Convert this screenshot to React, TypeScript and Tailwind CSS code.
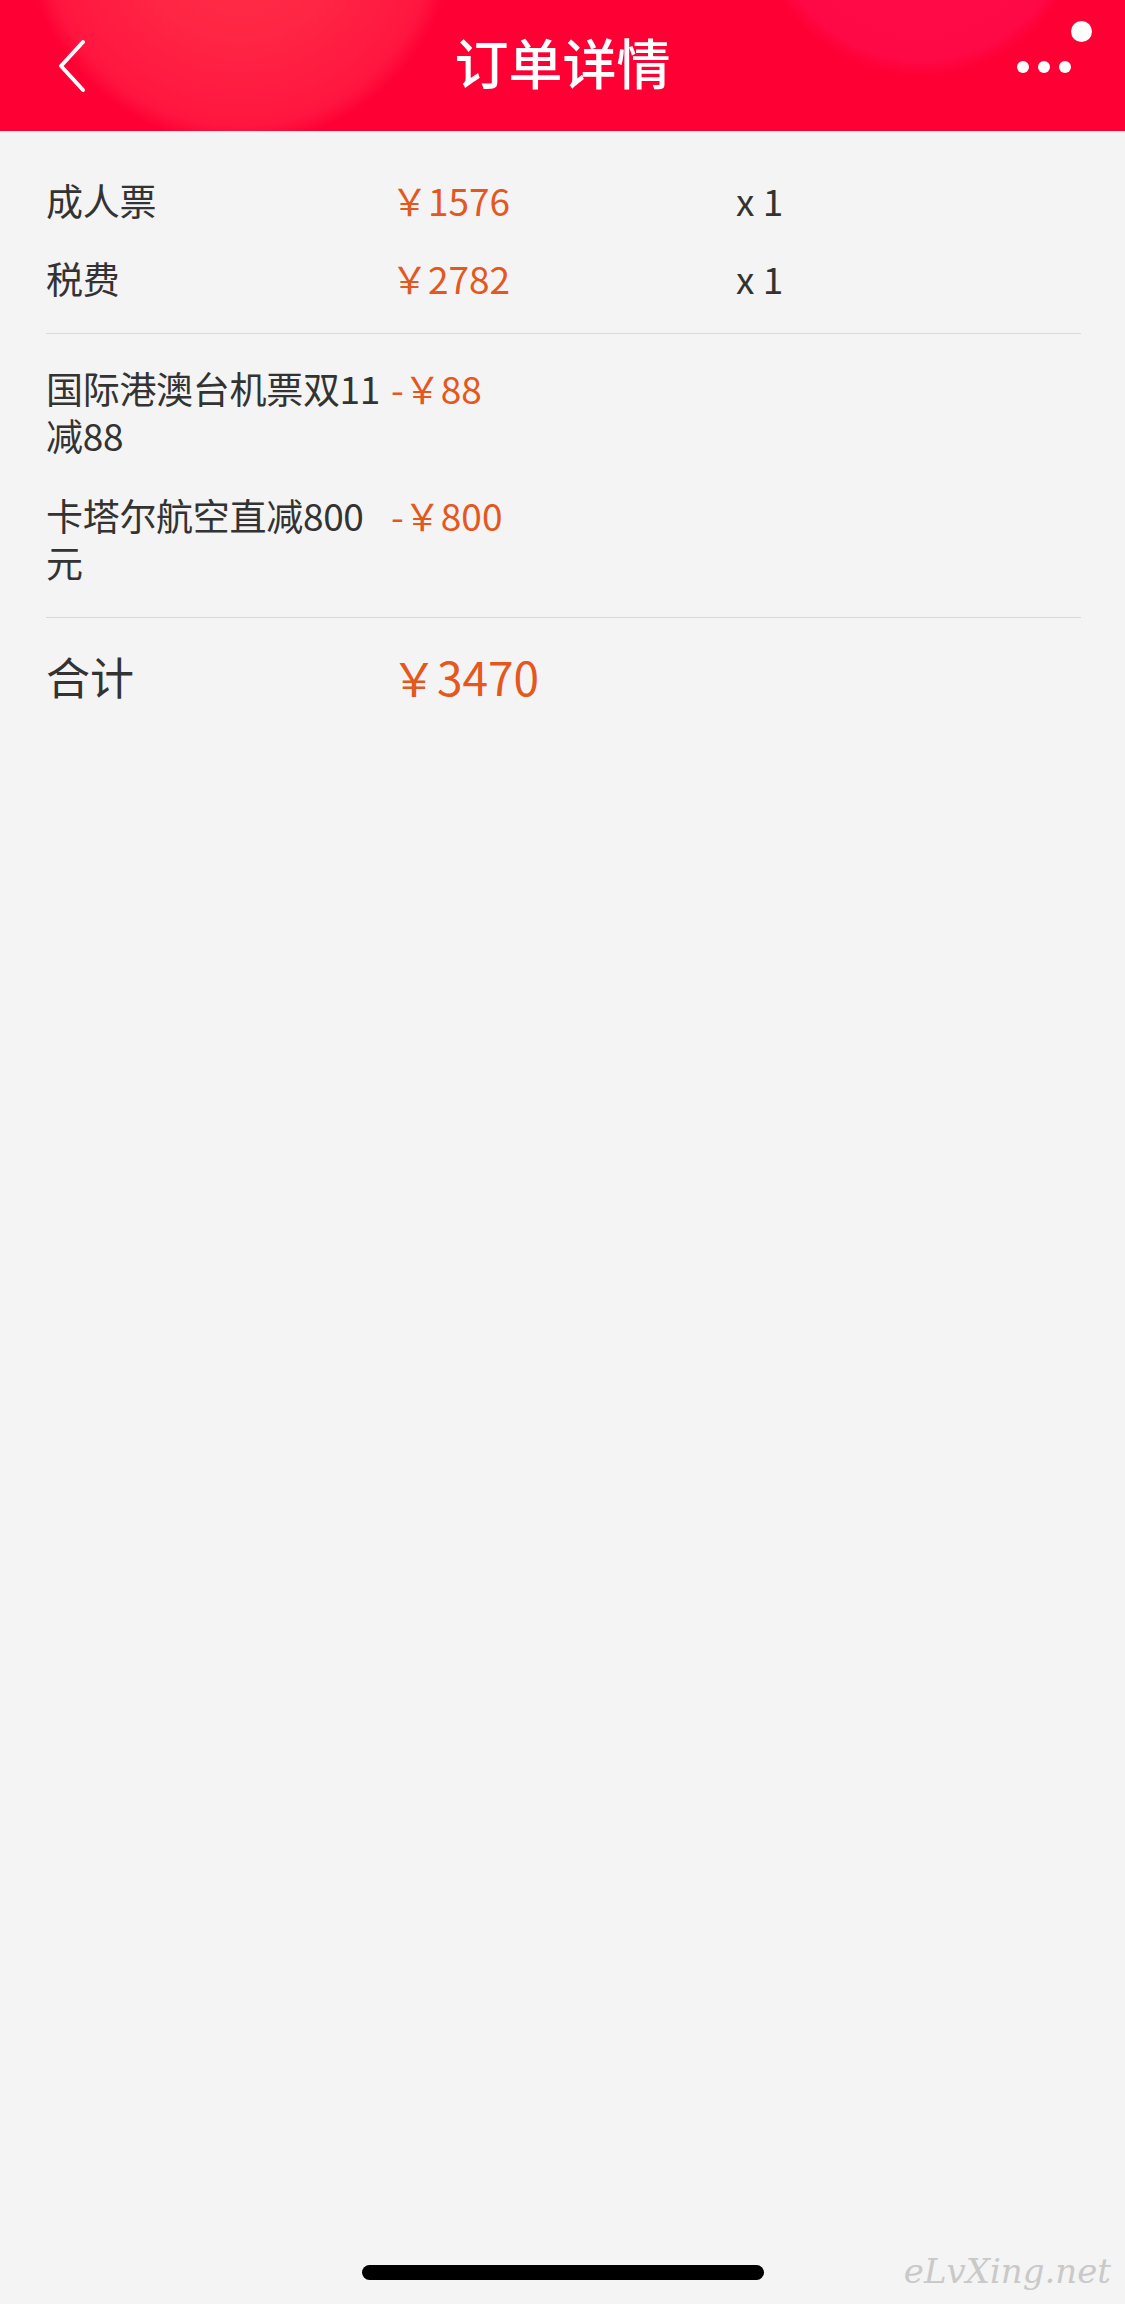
import React from "react";

type Item = { label: string; price: string; qty?: string };

const fees: Item[] = [
  { label: "成人票", price: "￥1576", qty: "x 1" },
  { label: "税费", price: "￥2782", qty: "x 1" },
];

const discounts: Item[] = [
  { label: "国际港澳台机票双11减88", price: "-￥88" },
  { label: "卡塔尔航空直减800元", price: "-￥800" },
];

function Row({ item }: { item: Item }) {
  return (
    <div className="grid grid-cols-3 items-start text-[37px] leading-[47px]">
      <div className="tracking-[-0.3px] text-[#333333]">{item.label}</div>
      <div className="text-[#e4581f]">{item.price}</div>
      <div className="text-[#333333]">{item.qty}</div>
    </div>
  );
}

export default function App() {
  return (
    <div
      className="relative flex min-h-[2304px] flex-col bg-[#f4f4f4]"
      style={{ fontFamily: '"Noto Sans CJK SC", "Noto Sans", sans-serif' }}
    >
      {/* 顶部导航 */}
      <header className="relative grid h-[131px] grid-cols-[1fr_auto_1fr] items-center overflow-hidden bg-[#fe0034] bg-[radial-gradient(circle_at_240px_-70px,#ff3149_0%,#ff2544_110px,#ff1640_195px,rgba(254,0,52,0)_215px),radial-gradient(circle_at_921px_-90px,#ff0c4a_0%,#ff0846_150px,rgba(254,0,52,0)_166px)]">
        <div className="pl-[56px]">
          <svg width="32" height="56" viewBox="0 0 32 56" fill="none">
            <path
              d="M27 4 L5 28 L27 52"
              stroke="white"
              strokeWidth="4"
              strokeLinecap="round"
              strokeLinejoin="round"
            />
          </svg>
        </div>
        <h1 className="pb-[8px] text-[54px] font-medium leading-none text-white">订单详情</h1>
        <div className="flex justify-end pr-[54px]">
          <div className="relative flex items-center gap-[9px] pt-[2px]">
            <span className="h-[12px] w-[12px] rounded-full bg-white" />
            <span className="h-[12px] w-[12px] rounded-full bg-white" />
            <span className="h-[12px] w-[12px] rounded-full bg-white" />
            <span className="absolute -right-[21px] -top-[38px] h-[21px] w-[21px] rounded-full bg-white" />
          </div>
        </div>
      </header>

      <main className="flex-1 pl-[46px] pr-[44px]">
        <section className="flex flex-col gap-[31px] pb-[31px] pt-[46px]">
          {fees.map((f) => (
            <Row key={f.label} item={f} />
          ))}
        </section>
        <div className="h-px bg-[#d9d9d9]" />
        <section className="flex flex-col gap-[33px] py-[31px]">
          {discounts.map((d) => (
            <Row key={d.label} item={d} />
          ))}
        </section>
        <div className="h-px bg-[#d9d9d9]" />
        <section className="grid grid-cols-3 items-center pt-[33px]">
          <div className="text-[44px] leading-[50px] text-[#333333]">合计</div>
          <div className="text-[46px] leading-[50px] text-[#e4581f]">￥3470</div>
        </section>
      </main>

      {/* 底部 home 指示条 */}
      <div className="flex justify-center pb-[24px]">
        <div className="h-[15px] w-[402px] rounded-full bg-black" />
      </div>

      <span
        className="absolute bottom-[16px] right-[14px] text-[34px] italic leading-none text-[#c9c9c9]"
        style={{ fontFamily: '"DejaVu Serif", serif' }}
      >
        eLvXing.net
      </span>
    </div>
  );
}
